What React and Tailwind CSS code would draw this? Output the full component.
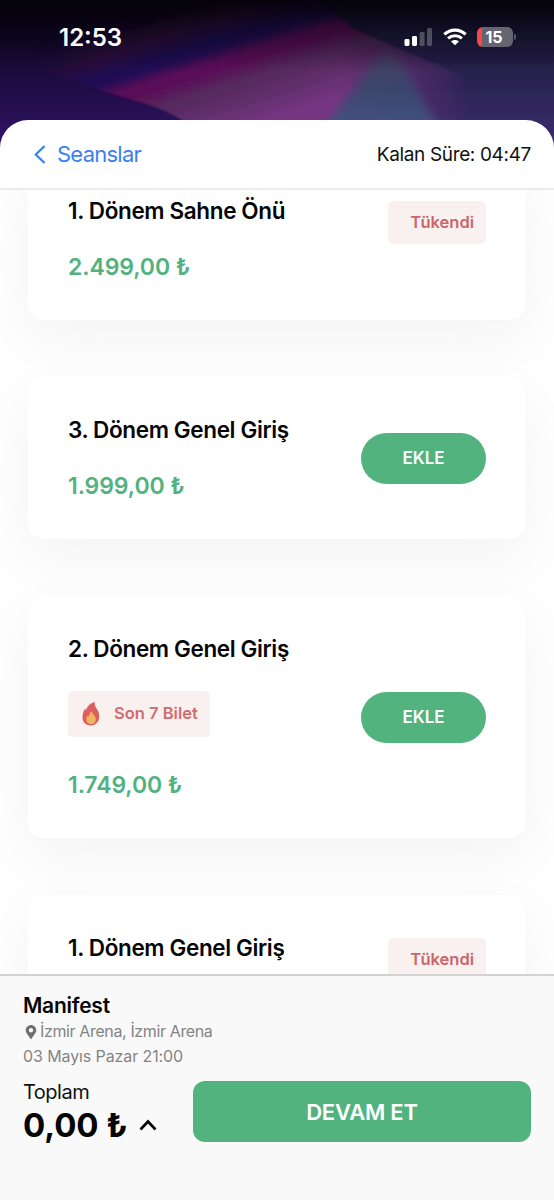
import { FaMapMarkerAlt } from "react-icons/fa";

const tickets = [
  { id: 1, title: "1. Dönem Sahne Önü", price: "2.499,00 ₺", soldOut: true },
  { id: 2, title: "3. Dönem Genel Giriş", price: "1.999,00 ₺" },
  { id: 3, title: "2. Dönem Genel Giriş", price: "1.749,00 ₺", notice: "Son 7 Bilet" },
  { id: 4, title: "1. Dönem Genel Giriş", soldOut: true },
];

function Wallpaper() {
  return (
    <svg className="absolute left-0 top-0" width="554" height="152" viewBox="0 0 554 152">
      <defs>
        <linearGradient id="left" x1="0" y1="0" x2="0" y2="1">
          <stop offset="0" stopColor="#05020e" />
          <stop offset="0.35" stopColor="#180a35" />
          <stop offset="0.7" stopColor="#250f50" />
          <stop offset="1" stopColor="#341468" />
        </linearGradient>
        <linearGradient id="right" x1="0" y1="0" x2="0" y2="1">
          <stop offset="0" stopColor="#06060f" />
          <stop offset="0.35" stopColor="#1e1b3d" />
          <stop offset="0.75" stopColor="#3b2f70" />
          <stop offset="1" stopColor="#5b489c" />
        </linearGradient>
        {/* runs across the diagonal light streaks */}
        <linearGradient id="streak" gradientUnits="userSpaceOnUse" x1="164.8" y1="2.3" x2="210.3" y2="145.3">
          <stop offset="0" stopColor="#1f0a2e" stopOpacity="0" />
          <stop offset="0.22" stopColor="#2e0f3c" />
          <stop offset="0.34" stopColor="#1e0a52" />
          <stop offset="0.4" stopColor="#220a56" />
          <stop offset="0.48" stopColor="#5a0d58" />
          <stop offset="0.55" stopColor="#5a1158" />
          <stop offset="0.65" stopColor="#55295e" />
          <stop offset="0.78" stopColor="#602e6a" />
          <stop offset="0.96" stopColor="#763583" />
        </linearGradient>
        <linearGradient id="teal" x1="0" y1="0" x2="0" y2="1">
          <stop offset="0" stopColor="#43405f" />
          <stop offset="0.35" stopColor="#38476a" />
          <stop offset="1" stopColor="#405a8a" />
        </linearGradient>
        <linearGradient id="shade" x1="0" y1="0" x2="0" y2="1">
          <stop offset="0" stopColor="#040209" stopOpacity="0.92" />
          <stop offset="0.35" stopColor="#040209" stopOpacity="0.5" />
          <stop offset="1" stopColor="#040209" stopOpacity="0" />
        </linearGradient>
        <linearGradient id="fade" gradientUnits="userSpaceOnUse" x1="0" y1="0" x2="554" y2="0">
          <stop offset="0.06" stopColor="#fff" stopOpacity="0" />
          <stop offset="0.17" stopColor="#fff" />
          <stop offset="0.62" stopColor="#fff" />
          <stop offset="0.74" stopColor="#fff" stopOpacity="0.5" />
          <stop offset="0.85" stopColor="#fff" stopOpacity="0" />
        </linearGradient>
        <mask id="sides" maskUnits="userSpaceOnUse" x="0" y="0" width="554" height="152">
          <rect width="554" height="152" fill="url(#fade)" />
        </mask>
        <filter id="blur1" filterUnits="userSpaceOnUse" x="-40" y="-40" width="640" height="240">
          <feGaussianBlur stdDeviation="1.2" />
        </filter>
        <filter id="blur5" filterUnits="userSpaceOnUse" x="-40" y="-40" width="640" height="240">
          <feGaussianBlur stdDeviation="5" />
        </filter>
        <filter id="blur20" filterUnits="userSpaceOnUse" x="-100" y="-100" width="800" height="360">
          <feGaussianBlur stdDeviation="20" />
        </filter>
      </defs>
      <rect width="554" height="152" fill="url(#left)" />
      <path d="M320 -60H660V220H320Z" fill="url(#right)" filter="url(#blur20)" />
      <g mask="url(#sides)">
        <path
          d="M20 62L78 83L155 107Q176 114 192 128L200 160H520V100L450 70L400 49L352 28L325 5L300 -20H20Z"
          fill="url(#streak)"
          filter="url(#blur1)"
        />
      </g>
      <path d="M378 58Q388 50 400 60L446 140H314Z" fill="url(#teal)" opacity="0.9" filter="url(#blur5)" />
      <rect width="554" height="72" fill="url(#shade)" />
    </svg>
  );
}

function StatusBar() {
  return (
    <div className="relative flex h-[120px] items-start justify-between pl-[59px] pr-[38px] text-white">
      <span className="mt-[22px] text-[24px] font-semibold leading-8">12:53</span>
      <div className="mt-[26px] flex h-[22px] items-center">
        <svg width="28" height="18" viewBox="0 0 28 18" fill="#fff">
          <rect x="0.5" y="11" width="5" height="7" rx="1.4" />
          <rect x="8" y="8" width="5" height="10" rx="1.4" />
          <rect x="15.6" y="4" width="5" height="14" rx="1.4" opacity="0.25" />
          <rect x="23" y="0" width="5" height="18" rx="1.4" opacity="0.25" />
        </svg>
        <svg className="ml-[11px]" width="24" height="18" viewBox="0 0 25 18" fill="none" stroke="#fff" strokeWidth="3.2">
          <path d="M1.4 6.3C7.6 0.4 17.4 0.4 23.6 6.3" />
          <path d="M5.3 10.5C9.4 6.7 15.6 6.7 19.7 10.5" />
          <path d="M8.4 13.6C10.7 11.5 14.3 11.5 16.6 13.6L12.5 17.7Z" fill="#fff" stroke="none" />
        </svg>
        <div className="ml-[10px] flex h-[20px] w-[36px] items-center justify-center rounded-[6px] bg-[linear-gradient(90deg,#f5484c_0_5px,#66646f_5px)] pr-[2px] text-[16px] font-bold leading-none">
          15
        </div>
        <div className="ml-[1px] h-[6px] w-[2px] rounded-r-full bg-[#5b5870]" />
      </div>
    </div>
  );
}

function Flame() {
  return (
    <svg width="18" height="24" viewBox="0 0 18 24">
      <path
        d="M12.8 0C12.4 2.6 13.2 4.4 14.8 7C16.4 9.4 17.5 11.8 17.3 14.8C17 20 13.6 23.4 9 23.4C4 23.4 0.6 20.2 0.5 15.4C0.4 11.7 1.8 8.6 3.3 6C3.3 7.2 3.5 7.8 4.1 8.4C5 4.4 8.4 1 12.8 0Z"
        fill="#d9605c"
      />
      <path
        d="M9.4 9.4C10.3 11.6 13.8 13.8 13.8 17.3C13.8 20.5 11.8 22.2 9 22.2C6.2 22.2 4.3 20.4 4.3 17.5C4.3 15.7 4.9 14.6 5.7 13.6C6 14.3 6.3 14.6 6.9 14.8C7 12.5 7.8 10.7 9.4 9.4Z"
        fill="#efb561"
      />
    </svg>
  );
}

function TicketCard({ ticket }) {
  return (
    <div className="flex justify-between rounded-[16px] bg-white pb-[37px] pl-10 pr-[39px] pt-[37px] shadow-[0_20px_60px_rgba(0,0,0,0.045)]">
      <div>
        <h3 className="whitespace-nowrap text-[22.5px] font-semibold leading-8 tracking-[-0.37px] text-[#050505]">
          {ticket.title}
        </h3>
        {ticket.notice && (
          <div className="mt-[26px] flex h-[46px] w-[142px] items-center rounded-[5px] bg-[#f9f0f0] pl-[14px] text-[16.5px] font-semibold text-[#d36b6e]">
            <Flame />
            <span className="ml-[14px] whitespace-nowrap pb-0.5">{ticket.notice}</span>
          </div>
        )}
        {ticket.price && (
          <p
            className={`${ticket.notice ? "mt-[32px]" : "mt-[24px]"} whitespace-nowrap text-[23px] font-semibold leading-8 tracking-[-0.1px] text-[#52b27f]`}
          >
            {ticket.price}
          </p>
        )}
      </div>

      {ticket.soldOut ? (
        <div className="mt-[6px] flex h-[43px] w-[98px] items-center justify-end rounded-[5px] bg-[#f9f0f0] pr-3 text-[16.5px] font-semibold text-[#cb666b]">
          Tükendi
        </div>
      ) : (
        <button className="h-[51px] w-[125px] self-center rounded-full bg-[#52b37f] pt-0.5 text-[17px] font-semibold tracking-[-0.1px] text-white">
          EKLE
        </button>
      )}
    </div>
  );
}

export default function App() {
  return (
    <div className="relative flex h-[1200px] w-[554px] flex-col overflow-hidden bg-white font-['Inter',sans-serif]">
      <Wallpaper />
      <StatusBar />

      {/* HEADER */}
      <header className="relative flex h-[70px] shrink-0 items-center justify-between rounded-t-[28px] border-b-2 border-[#ececec] bg-white pl-[34px] pr-[23px]">
        <div className="flex items-center text-[22px] text-[#3b7ff0]">
          <svg width="12" height="19" viewBox="0 0 12 19" fill="none" stroke="currentColor" strokeWidth="2.2">
            <path d="M10.6 1L1.8 9.5L10.6 18" />
          </svg>
          <span className="ml-[11px] tracking-[-0.75px]">Seanslar</span>
        </div>
        <span className="pt-0.5 text-[19px] tracking-[-0.35px] text-[#111]">Kalan Süre: 04:47</span>
      </header>

      {/* TICKETS */}
      <main className="relative h-[784px] shrink-0 overflow-hidden bg-[#fefefe]">
        <div className="-mt-8 flex flex-col gap-[57px] pl-[28px] pr-[29px]">
          {tickets.map((ticket) => (
            <TicketCard key={ticket.id} ticket={ticket} />
          ))}
        </div>
      </main>

      {/* FOOTER */}
      <footer className="relative flex-1 border-t-2 border-[#d2d2d2] bg-[#f9f9f9] px-[23px] pt-[17px]">
        <h2 className="text-[21px] font-semibold leading-[26px] tracking-[-0.25px] text-[#050505]">Manifest</h2>
        <p className="flex items-center text-[16px] leading-[25px] tracking-[-0.37px] text-[#848484]">
          <FaMapMarkerAlt className="ml-[2px] mr-[3px] h-[14px] w-[12px] text-[#6f6f6f]" />
          İzmir Arena, İzmir Arena
        </p>
        <p className="text-[16px] leading-[25px] tracking-[-0.1px] text-[#848484]">03 Mayıs Pazar 21:00</p>
        <div className="mt-[11px] flex items-start justify-between">
          <div>
            <p className="text-[20px] leading-[24px] tracking-[-0.5px] text-[#111]">Toplam</p>
            <div className="flex items-center text-[33px] font-bold leading-[42px] text-[#050505]">
              <span className="whitespace-nowrap tracking-[-0.1px]">0,00 ₺</span>
              <svg className="ml-[12px]" width="18" height="12" viewBox="0 0 18 12" fill="none" stroke="currentColor" strokeWidth="2.6">
                <path d="M1.5 10.5L9 2.5L16.5 10.5" />
              </svg>
            </div>
          </div>
          <button className="mt-px h-[61px] w-[338px] rounded-[12px] bg-[#52b37f] pt-px text-[22px] font-semibold tracking-[-0.2px] text-white">
            DEVAM ET
          </button>
        </div>
      </footer>
    </div>
  );
}
